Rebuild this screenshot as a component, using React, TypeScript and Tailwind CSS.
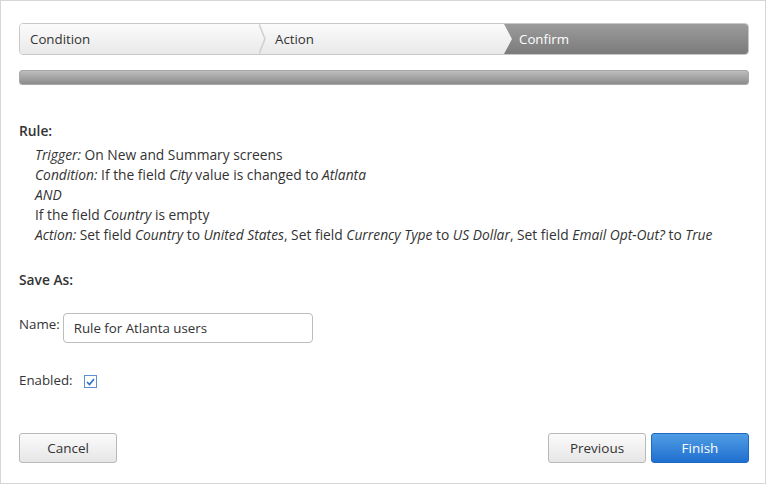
import React, { useState } from 'react'

const font = { fontFamily: '"Open Sans", "Noto Sans", "Liberation Sans", sans-serif' }

const App: React.FC = () => {
  const [name, setName] = useState('Rule for Atlanta users')
  const [enabled, setEnabled] = useState(true)

  return (
    <div className="w-[766px] h-[484px] bg-white border border-[#d6d6d6] flex flex-col pl-[18px] pr-[16px] text-[13.8px] text-[#333]" style={font}>
      {/* wizard steps */}
      <div className="mt-[22px] flex h-[32px] border border-[#c8c8c8] rounded-[4px] overflow-hidden">
        <div className="flex-1 flex items-center pl-[10px] pt-[2px] bg-gradient-to-b from-[#fbfbfb] to-[#e9e9e9] text-[13.3px]">
          Condition
        </div>
        <div className="relative flex-1 flex items-center pl-[16px] pt-[2px] bg-gradient-to-b from-[#fbfbfb] to-[#e9e9e9] text-[13.3px]">
          <svg className="absolute left-0 top-0" width="8" height="30" viewBox="0 0 8 30">
            <polyline points="0,0 6,15 0,30" fill="none" stroke="#cfcfcf" strokeWidth="1.5" />
          </svg>
          Action
        </div>
        <div className="relative flex-1 flex items-center pl-[15px] pt-[2px] bg-gradient-to-b from-[#9c9c9c] to-[#7b7b7b] text-white text-[13.3px]">
          <svg className="absolute left-0 top-0" width="9" height="30" viewBox="0 0 9 30">
            <defs>
              <linearGradient id="lg" x1="0" y1="0" x2="0" y2="1">
                <stop offset="0" stopColor="#fbfbfb" />
                <stop offset="1" stopColor="#e9e9e9" />
              </linearGradient>
            </defs>
            <polygon points="0,0 8,15 0,30" fill="url(#lg)" />
          </svg>
          Confirm
        </div>
      </div>

      {/* progress bar */}
      <div className="mt-[15px] h-[15px] rounded-[3px] border border-[#a8a8a8] bg-gradient-to-b from-[#bdbdbd] to-[#8c8c8c]" />

      {/* rule summary */}
      <div className="mt-[36px] leading-[20px]">
        <div className="font-semibold">Rule:</div>
        <div className="pl-[16px] mt-[4px]">
          <div><i>Trigger:</i> On New and Summary screens</div>
          <div><i>Condition:</i> If the field <i>City</i> value is changed to <i>Atlanta</i></div>
          <div><i>AND</i></div>
          <div>If the field <i>Country</i> is empty</div>
          <div>
            <i>Action:</i> Set field <i>Country</i> to <i>United States</i>, Set field <i>Currency Type</i> to{' '}
            <i>US Dollar</i>, Set field <i>Email Opt-Out?</i> to <i>True</i>
          </div>
        </div>
      </div>

      <div className="mt-[25px] font-semibold leading-[20px]">Save As:</div>

      <div className="mt-[23px] flex items-start gap-[3px]">
        <span className="leading-[20px] mt-[1px] text-[13.3px]">Name:</span>
        <input
          value={name}
          onChange={(e) => setName(e.target.value)}
          className="w-[250px] h-[30px] border border-[#bdbdbd] rounded-[4px] px-[10px] text-[13.3px] text-[#333] outline-none"
          style={font}
        />
      </div>

      <div className="mt-[27px] flex items-center gap-[11px]">
        <span className="leading-[20px] text-[13.3px]">Enabled:</span>
        <button
          onClick={() => setEnabled(!enabled)}
          className="w-[13px] h-[13px] border border-[#5b8fd6] bg-white flex items-center justify-center mt-[3px]"
        >
          {enabled && (
            <svg width="9" height="8" viewBox="0 0 9 8">
              <polyline points="1,4 3.5,6.5 8,1" fill="none" stroke="#2a6ec9" strokeWidth="1.6" />
            </svg>
          )}
        </button>
      </div>

      {/* footer buttons */}
      <div className="mt-auto mb-[20px] flex items-center">
        <button className="w-[98px] h-[30px] pt-[1px] border border-[#b8b8b8] rounded-[3px] bg-gradient-to-b from-[#fbfbfb] to-[#e6e6e6] text-[13.5px] text-[#333]">
          Cancel
        </button>
        <button className="ml-auto w-[98px] h-[30px] pt-[1px] border border-[#b8b8b8] rounded-[3px] bg-gradient-to-b from-[#fbfbfb] to-[#e6e6e6] text-[13.5px] text-[#333]">
          Previous
        </button>
        <button className="ml-[5px] w-[98px] h-[30px] pt-[1px] border border-[#1f69c4] rounded-[3px] bg-gradient-to-b from-[#4f9de3] to-[#1f6fd0] text-[13.5px] text-white">
          Finish
        </button>
      </div>
    </div>
  )
}

export default App
